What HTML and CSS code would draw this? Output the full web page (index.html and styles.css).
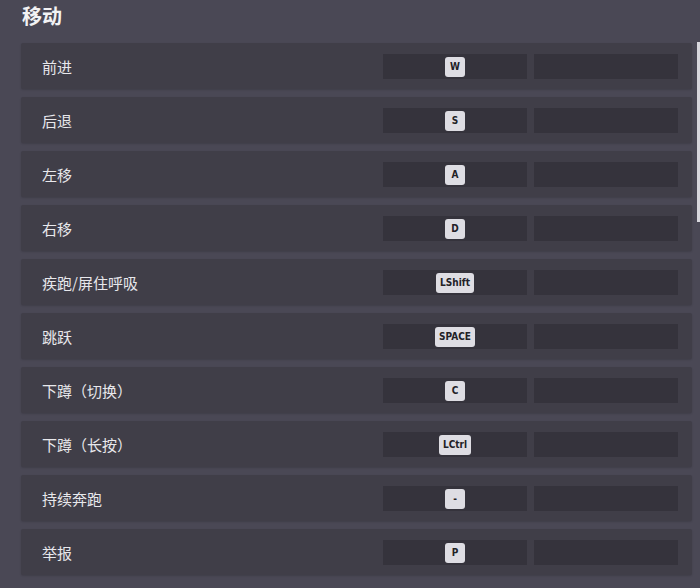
FILE: index.html
```html
<!DOCTYPE html>
<html lang="zh-CN">
<head>
    <meta charset="UTF-8">
    <title>按键设置 - 移动</title>
    <link rel="stylesheet" href="styles.css">
</head>
<body>

<div class="panel">
    <h2 class="section-title">移动</h2>

    <div class="bind-list">
        <div class="bind-row">
            <span class="bind-name">前进</span>
            <div class="slot"><span class="key">W</span></div>
            <div class="slot"></div>
        </div>
        <div class="bind-row">
            <span class="bind-name">后退</span>
            <div class="slot"><span class="key">S</span></div>
            <div class="slot"></div>
        </div>
        <div class="bind-row">
            <span class="bind-name">左移</span>
            <div class="slot"><span class="key">A</span></div>
            <div class="slot"></div>
        </div>
        <div class="bind-row">
            <span class="bind-name">右移</span>
            <div class="slot"><span class="key">D</span></div>
            <div class="slot"></div>
        </div>
        <div class="bind-row">
            <span class="bind-name">疾跑/屏住呼吸</span>
            <div class="slot"><span class="key">LShift</span></div>
            <div class="slot"></div>
        </div>
        <div class="bind-row">
            <span class="bind-name">跳跃</span>
            <div class="slot"><span class="key">SPACE</span></div>
            <div class="slot"></div>
        </div>
        <div class="bind-row">
            <span class="bind-name">下蹲（切换）</span>
            <div class="slot"><span class="key">C</span></div>
            <div class="slot"></div>
        </div>
        <div class="bind-row">
            <span class="bind-name">下蹲（长按）</span>
            <div class="slot"><span class="key">LCtrl</span></div>
            <div class="slot"></div>
        </div>
        <div class="bind-row">
            <span class="bind-name">持续奔跑</span>
            <div class="slot"><span class="key">-</span></div>
            <div class="slot"></div>
        </div>
        <div class="bind-row">
            <span class="bind-name">举报</span>
            <div class="slot"><span class="key">P</span></div>
            <div class="slot"></div>
        </div>
    </div>

    <div class="scrollbar"></div>
</div>

</body>
</html>
```

FILE: styles.css
```css
body {
    margin: 0;
    padding: 0;
    background-color: #4a4855;
    font-family: "Noto Sans CJK SC", "Noto Sans", sans-serif;
    overflow: hidden;
}

.panel {
    position: relative;
    height: 588px;
    padding: 0 8px 0 21px;
    box-sizing: border-box;
}

.section-title {
    margin: 0;
    padding: 3px 0 0 1px;
    height: 40px;
    box-sizing: border-box;
    font-size: 20px;
    font-weight: bold;
    color: #f2f2f4;
    line-height: 26px;
}

.bind-list {
    display: flex;
    flex-direction: column;
    gap: 8px;
    padding-top: 3px;
}

.bind-row {
    display: grid;
    grid-template-columns: 1fr 144px 144px;
    gap: 7px;
    align-items: center;
    height: 46px;
    padding: 0 14px 0 21px;
    background-color: #403e48;
    border-radius: 2px;
    box-shadow: 0 1px 2px rgba(0, 0, 0, 0.15);
}

.bind-name {
    font-size: 15px;
    color: #e8e8ec;
}

.slot {
    height: 25px;
    padding-top: 1px;
    box-sizing: border-box;
    background-color: #35333c;
    display: flex;
    align-items: center;
    justify-content: center;
}

.key {
    min-width: 20px;
    height: 20px;
    box-sizing: border-box;
    padding: 0 4px;
    background-color: #dedde3;
    border-radius: 3px;
    color: #222126;
    font-family: "DejaVu Sans Condensed", "DejaVu Sans", sans-serif;
    font-size: 10px;
    font-weight: bold;
    line-height: 20px;
    text-align: center;
}

.scrollbar {
    position: absolute;
    right: 0;
    top: 42px;
    width: 3px;
    height: 180px;
    background-color: #d8d7dd;
}
```
